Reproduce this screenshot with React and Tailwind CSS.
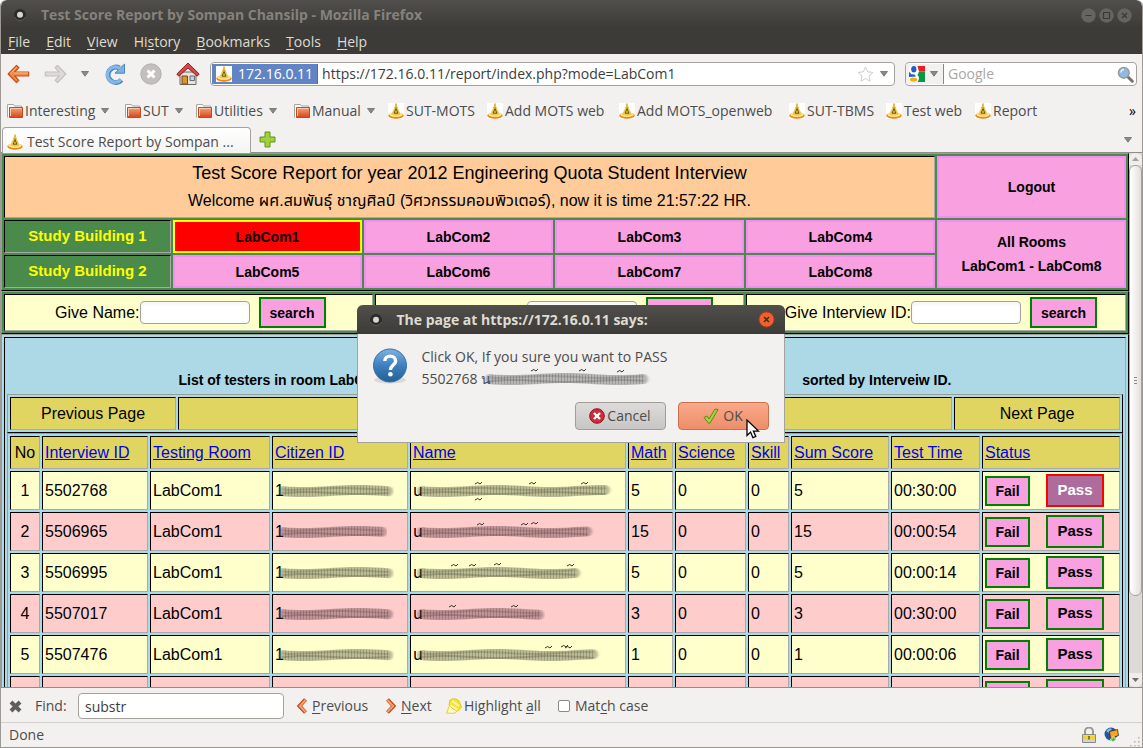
import { useState } from "react"

const BOOKMARKS = [
  { label: "Interesting", folder: true, width: "w-[118px]" },
  { label: "SUT", folder: true, width: "w-[71px]" },
  { label: "Utilities", folder: true, width: "w-[98px]" },
  { label: "Manual", folder: true, width: "w-[94px]" },
  { label: "SUT-MOTS", width: "w-[99px]" },
  { label: "Add MOTS web", width: "w-[132px]" },
  { label: "Add MOTS_openweb", width: "w-[170px]" },
  { label: "SUT-TBMS", width: "w-[97px]" },
  { label: "Test web", width: "w-[89px]" },
  { label: "Report", width: "w-[80px]" },
]

const MENUS = [
  ["", "F", "ile"],
  ["", "E", "dit"],
  ["", "V", "iew"],
  ["Hi", "s", "tory"],
  ["", "B", "ookmarks"],
  ["", "T", "ools"],
  ["", "H", "elp"],
]

const ROWS = [
  { no: 1, id: "5502768", room: "LabCom1", math: 5, science: 0, skill: 0, sum: 5, time: "00:30:00", cid: 118, name: 194, marks: [[58, 3], [58, 19], [112, 3], [164, 3]] },
  { no: 2, id: "5506965", room: "LabCom1", math: 15, science: 0, skill: 0, sum: 15, time: "00:00:54", cid: 114, name: 180, marks: [[60, 3], [104, 3], [114, 2]] },
  { no: 3, id: "5506995", room: "LabCom1", math: 5, science: 0, skill: 0, sum: 5, time: "00:00:14", cid: 118, name: 163, marks: [[34, 3], [52, 3], [77, 2], [150, 3]] },
  { no: 4, id: "5507017", room: "LabCom1", math: 3, science: 0, skill: 0, sum: 3, time: "00:30:00", cid: 118, name: 130, marks: [[32, 3], [94, 3]] },
  { no: 5, id: "5507476", room: "LabCom1", math: 1, science: 0, skill: 0, sum: 1, time: "00:00:06", cid: 118, name: 186, marks: [[128, 3], [144, 2], [148, 3]] },
  { no: "" },
]

const COLUMNS = ["Interview ID", "Testing Room", "Citizen ID", "Name", "Math", "Science", "Skill", "Sum Score", "Test Time", "Status"]

function Caret() {
  return (
    <svg width="8" height="6" viewBox="0 0 8 6" className="shrink-0" aria-hidden="true">
      <path d="M0.500 0.500h7L4 5.200z" fill="#8b8985" stroke="#6f6d69" strokeWidth="0.800" />
    </svg>
  )
}

function SiteIcon() {
  return (
    <svg width="16" height="16" viewBox="0 0 16 16" className="shrink-0 bg-white" aria-hidden="true">
      <ellipse cx="8" cy="12.500" rx="7.800" ry="3.200" fill="#f39a1e" />
      <ellipse cx="8" cy="11.600" rx="6.600" ry="2.200" fill="#fdf0b4" />
      <path d="M7.500 0.500h1L9.500 4.500l3.500 7q-5 2.500-10 0l3.500-7z" fill="#f0ca45" />
      <path d="M8 0.500v3M6.500 4.500h3" stroke="#d9a520" />
      <path d="M8 5.500l-1.800 4.500M8.200 5.500l1.500 4.500M6 10.200h4.200" stroke="#6b5320" fill="none" />
      <path d="M1 13.200q7 3.400 14 0" stroke="#e8801a" fill="none" />
    </svg>
  )
}

function FolderIcon() {
  return (
    <svg width="16" height="16" viewBox="0 0 16 16" className="shrink-0" aria-hidden="true">
      <defs>
        <linearGradient id="folder" x1="0" y1="0" x2="0" y2="1">
          <stop offset="0" stopColor="#f6a27a" />
          <stop offset="1" stopColor="#d6451b" />
        </linearGradient>
      </defs>
      <path d="M0.500 14.500v-13h6l1 1.500h7v3" fill="#fff" stroke="#a8a5a0" />
      <path d="M2.500 14.500v-10h13v10z" fill="url(#folder)" stroke="#c24a1d" />
      <path d="M3.500 13v-7.500h11" fill="none" stroke="#fbc9ae" />
    </svg>
  )
}

function BackArrow({ disabled }) {
  return (
    <svg width="24" height="20" viewBox="0 0 24 20" className={disabled ? "-scale-x-100" : ""} aria-hidden="true">
      <path
        d="M9.500 1.500L1.200 10l8.300 8.500 2.400-2.200-4.200-4.300h14v-4h-14l4.200-4.300z"
        fill={disabled ? "#dddbd8" : "#f18a45"}
        stroke={disabled ? "#c4c1bd" : "#c8501c"}
        strokeLinejoin="round"
        strokeWidth="1.200"
      />
      {!disabled && <path d="M9.500 3.300L3.200 9.500M7 9h14" stroke="#fbc08e" fill="none" />}
    </svg>
  )
}

function ReloadIcon() {
  return (
    <svg width="22" height="22" viewBox="0 0 22 22" aria-hidden="true">
      <path d="M17.500 17A7.700 7.700 0 1 1 15.500 5" fill="none" stroke="#4a86c2" strokeWidth="5" />
      <path d="M11 10.200h9.500v-9l-3.200 2.600z" fill="#7db1e2" stroke="#4a86c2" strokeLinejoin="round" />
      <path d="M17 16.600A7.700 7.700 0 1 1 16 5.600" fill="none" stroke="#86b7e6" strokeWidth="3.200" />
    </svg>
  )
}

function StopIcon() {
  return (
    <svg width="22" height="22" viewBox="0 0 22 22" aria-hidden="true">
      <circle cx="11" cy="11" r="10.200" fill="#c2bfbc" stroke="#b3b0ac" />
      <path d="M7.500 7.500l7 7M14.500 7.500l-7 7" stroke="#fff" strokeWidth="3" />
    </svg>
  )
}

function HomeIcon() {
  return (
    <svg width="24" height="24" viewBox="0 0 24 24" aria-hidden="true">
      <path d="M4 10h16v12.500H4z" fill="#e6e4e0" stroke="#6d6b66" />
      <path d="M6 14h5.500v8H6z" fill="#d9972c" stroke="#7c4d12" />
      <path d="M14 14h4.500v4.500H14z" fill="#bcd3ea" stroke="#6d6b66" />
      <path d="M12 1L0.800 12l2 2.200L12 6l9.200 8.200 2-2.200z" fill="#cf4a4a" stroke="#96201f" strokeLinejoin="round" />
    </svg>
  )
}

function GoogleIcon() {
  return (
    <svg width="16" height="16" viewBox="0 0 16 16" className="shrink-0" aria-hidden="true">
      <path d="M0 0h16v16H0z" fill="#fff" />
      <path d="M8.500 0H16v5.500h-6z" fill="#ee1c25" />
      <path d="M10 5.500h6V16H8.500q3-4 0-7z" fill="#0d9648" />
      <path d="M0 5.500l2.500 2.800H0z" fill="#e2342b" />
      <ellipse cx="4.800" cy="3.200" rx="2.600" ry="3.200" fill="#1d5fc9" />
      <path d="M0 8l5.500.5 1.500 2L0 11z" fill="#1d5fc9" />
      <ellipse cx="4.500" cy="13.600" rx="3.600" ry="2.200" fill="#f3ae14" />
    </svg>
  )
}

function SearchIcon() {
  return (
    <svg width="17" height="17" viewBox="0 0 17 17" className="shrink-0" aria-hidden="true">
      <path d="M10.500 10.500l4.800 4.800" stroke="#76746f" strokeWidth="3" strokeLinecap="round" />
      <circle cx="6.800" cy="6.800" r="5.400" fill="#8fb8e6" stroke="#9a9894" strokeWidth="1.400" />
      <path d="M4 6.500a3 3 0 0 1 3-3" stroke="#e7f1fb" strokeWidth="1.400" fill="none" />
    </svg>
  )
}

function WindowDot() {
  return (
    <svg width="14" height="14" viewBox="0 0 14 14" className="shrink-0" aria-hidden="true">
      <circle cx="7" cy="7" r="6" fill="#2c2b28" />
      <path d="M1.500 9a6 6 0 0 0 11 0" stroke="#5b5a55" fill="none" />
      <circle cx="7" cy="6.800" r="3" fill="#d8d5cf" />
    </svg>
  )
}

function Chevron({ flip }) {
  return (
    <svg width="12" height="16" viewBox="0 0 12 16" className={flip ? "shrink-0 -scale-x-100" : "shrink-0"} aria-hidden="true">
      <path d="M9.500 1.500L3.500 8L9.500 14.500" fill="none" stroke="#c4431c" strokeWidth="4" />
      <path d="M9.500 2L3.800 8L9.500 14" fill="none" stroke="#f4a06b" strokeWidth="2" />
    </svg>
  )
}

// rubbed-out text, so only a grey smear and a few stray marks are left
function Smudge({ width, marks = [], color = "#4c4c38" }) {
  const wave = (y, amp, phase) => {
    let d = `M5 ${y}`
    for (let x = 8; x <= width - 5; x += 6) {
      d += ` L${x} ${(y + Math.sin(x / 17 + phase) * amp).toFixed(1)}`
    }
    return d
  }
  return (
    <svg width={width + 4} height="24" viewBox={`0 0 ${width + 4} 24`} className="-ml-1.5 shrink-0" aria-hidden="true">
      <defs>
        <filter id="rub" x="-5%" y="-80%" width="110%" height="260%">
          <feGaussianBlur stdDeviation="1.500 0.700" />
        </filter>
        <pattern id="grain" width="3" height="24" patternUnits="userSpaceOnUse">
          <path d="M1.500 0v24" stroke="#000" strokeOpacity="0.160" />
        </pattern>
      </defs>
      <g filter="url(#rub)" fill="none" stroke={color} strokeLinecap="round">
        <path d={wave(12, 1, 0)} strokeWidth="10" strokeOpacity="0.380" />
        <path d={wave(10, 1, 1)} strokeWidth="2" strokeOpacity="0.220" />
        <path d={wave(14, 1, 3)} strokeWidth="2" strokeOpacity="0.280" />
      </g>
      <path d={wave(12, 1, 0)} fill="none" strokeWidth="9" stroke="url(#grain)" />
      {marks.map(([x, y]) => (
        <path key={`${x}-${y}`} d={`M${x} ${y + 2}q3 -3 5 0l2 -2`} stroke="#333" fill="none" />
      ))}
    </svg>
  )
}

function LabButton({ children, active, className = "" }) {
  return (
    <button
      className={`border-2 text-sm font-bold text-black ${
        active ? "border-[#ffff00] bg-[#ff0000]" : "border-[#f18ef0] bg-[#f9a1e0]"
      } ${className}`}
    >
      {children}
    </button>
  )
}

function SearchCell({ label, id, labelWidth }) {
  return (
    <form
      onSubmit={(e) => e.preventDefault()}
      className="flex h-[37px] items-center justify-center border border-t-black border-l-black border-r-[#a9a9a9] border-b-[#a9a9a9] bg-[#ffffcc]"
    >
      <label htmlFor={id} className={`${labelWidth} text-right whitespace-nowrap`}>{label}</label>
      <input id={id} className="h-[23px] w-[110px] rounded border border-[#a5a29e] bg-white px-1 shadow-inner" />
      <button className="ml-[9px] h-[31px] w-[67px] border-2 border-[#008000] bg-[#f9a1e0] text-sm font-bold">search</button>
    </form>
  )
}

function TitleBar() {
  return (
    <div className="flex h-7 items-center rounded-t-md bg-gradient-to-b from-[#504f4b] to-[#3c3b37] pt-0.5 pr-2.5 pl-3">
      <WindowDot />
      <h1 className="ml-3.5 flex-1 truncate font-bold text-[#85827c]">
        Test Score Report by Sompan Chansilp - Mozilla Firefox
      </h1>
      <div className="flex gap-[3px]">
        {["M4.500 7.500h6", "M4.500 4.500h6v6h-6z", "M5 5l5 5M10 5l-5 5"].map((d, i) => (
          <button key={d} aria-label={["Minimize", "Maximize", "Close"][i]}>
            <svg width="15" height="15" viewBox="0 0 15 15">
              <circle cx="7.500" cy="7.500" r="7.200" fill="#66645f" />
              <path d={d} stroke="#3a3935" strokeWidth="1.200" fill="none" />
            </svg>
          </button>
        ))}
      </div>
    </div>
  )
}

function Toolbar() {
  return (
    <div className="flex h-10 items-center pr-[5px] pl-1.5">
      <button aria-label="Back" className="w-9"><BackArrow /></button>
      <button aria-label="Forward" className="w-[38px]"><BackArrow disabled /></button>
      <button aria-label="History" className="w-[23px]"><Caret /></button>
      <button aria-label="Reload" className="w-9"><ReloadIcon /></button>
      <button aria-label="Stop" className="w-9"><StopIcon /></button>
      <button aria-label="Home" className="w-[34px]"><HomeIcon /></button>

      <div className="flex h-6 flex-1 items-center rounded border border-[#a5a29e] bg-white pr-1.5 pl-px">
        <div className="flex h-5 items-center gap-1.5 border-r border-[#4d6fa8] bg-[#6185c4] px-1 text-white">
          <SiteIcon />
          <span>172.16.0.11</span>
        </div>
        <input
          aria-label="Address"
          defaultValue="https://172.16.0.11/report/index.php?mode=LabCom1"
          className="min-w-0 flex-1 bg-transparent px-1 text-[#3c3c3c] outline-none"
        />
        <svg width="17" height="16" viewBox="0 0 17 16" className="mr-1.5" aria-hidden="true">
          <path d="M8.500 1l2.200 4.800 5.300.6-3.900 3.600 1 5.200-4.600-2.600-4.600 2.600 1-5.200L1 6.400l5.300-.6z" fill="#fff" stroke="#cfccc8" />
        </svg>
        <Caret />
      </div>

      <div className="ml-2.5 flex h-6 w-[232px] items-center rounded border border-[#a5a29e] bg-white pr-0.5">
        <button aria-label="Search engine" className="flex h-5 w-[38px] items-center gap-[5px] border-r border-[#8b8985] bg-[#f2f1f0] pl-[3px]">
          <GoogleIcon />
          <Caret />
        </button>
        <input aria-label="Search" placeholder="Google" className="min-w-0 flex-1 px-1 outline-none placeholder:text-[#aaa7a3]" />
        <SearchIcon />
      </div>
    </div>
  )
}

function ConfirmDialog({ onClose }) {
  return (
    <div
      role="dialog"
      aria-label="The page at https://172.16.0.11 says:"
      className="absolute top-[305px] left-[calc(50%-215px)] w-[428px] rounded-t-md border border-t-0 border-[#a5a29e] bg-[#f2f1f0]"
    >
      <div className="-mx-px flex h-[29px] items-center rounded-t-md bg-gradient-to-b from-[#504f4b] to-[#3c3b37] pr-2.5 pl-3">
        <WindowDot />
        <h2 className="ml-3.5 flex-1 font-bold text-[#dfdbd2]">The page at https://172.16.0.11 says:</h2>
        <button aria-label="Close" onClick={onClose}>
          <svg width="17" height="17" viewBox="0 0 17 17">
            <circle cx="8.500" cy="8.500" r="7.500" fill="#ee6231" stroke="#b83c12" />
            <path d="M6 6l5 5M11 6l-5 5" stroke="#4a2012" strokeWidth="1.400" />
          </svg>
        </button>
      </div>

      <div className="flex gap-3.5 px-3.5 pt-3">
        <svg width="36" height="38" viewBox="0 0 36 38" className="shrink-0" aria-hidden="true">
          <defs>
            <linearGradient id="ask" x1="0" y1="0" x2="0" y2="1">
              <stop offset="0" stopColor="#7fb2dd" />
              <stop offset="0.500" stopColor="#3d7fbf" />
              <stop offset="1" stopColor="#23618f" />
            </linearGradient>
          </defs>
          <ellipse cx="18" cy="34" rx="16" ry="3.500" fill="#000" opacity="0.100" />
          <circle cx="18" cy="19.500" r="16.500" fill="url(#ask)" stroke="#2f6fae" />
          <path d="M12.800 15c0-6.500 10.800-6.500 10.800 0 0 4-5.200 4.200-5.200 9" fill="none" stroke="#fff" strokeWidth="3.400" />
          <circle cx="18.400" cy="28.300" r="2.300" fill="#fff" />
        </svg>
        <div className="leading-[22px]">
          <p>Click OK, If you sure you want to PASS</p>
          <p className="flex h-[22px] items-center">
            <span>5502768 น</span>
            <Smudge width={168} marks={[[46, 2], [94, 2], [132, 3]]} color="#555" />
          </p>
        </div>
      </div>

      <div className="flex justify-end gap-3 pt-3 pr-[15px] pb-3">
        <button
          onClick={onClose}
          className="flex h-7 w-[91px] items-center justify-center gap-0.5 rounded border border-[#a09d99] bg-gradient-to-b from-[#dedcda] to-[#c8c6c4]"
        >
          <svg width="16" height="16" viewBox="0 0 16 16" aria-hidden="true">
            <circle cx="8" cy="8" r="7.300" fill="#cf2b3a" stroke="#8e1420" />
            <path d="M5 5l6 6M11 5l-6 6" stroke="#fff" strokeWidth="2.400" />
          </svg>
          Cancel
        </button>
        <button
          onClick={onClose}
          className="relative flex h-7 w-[91px] items-center justify-center gap-1 rounded border border-[#c9714f] bg-gradient-to-b from-[#f8a98a] to-[#ee8d69]"
        >
          <svg width="16" height="16" viewBox="0 0 16 16" aria-hidden="true">
            <path d="M1 9.500l3-1.500 2 3L12 1l3 .5L7 15.200H5.500z" fill="#a4d63c" stroke="#5a8a1c" strokeLinejoin="round" />
          </svg>
          OK
          <svg width="14" height="21" viewBox="0 0 14 21" className="absolute top-4 left-[67px]" aria-hidden="true">
            <path d="M1 1v15.500l3.600-3.400 2.300 5.600 2.900-1.200-2.400-5.400H12.500z" fill="#fff" stroke="#000" strokeWidth="1.300" />
          </svg>
        </button>
      </div>
    </div>
  )
}

function App() {
  const [open, setOpen] = useState(true)
  const cell = "border border-t-black border-l-black border-r-[#a9a9a9] border-b-[#a9a9a9]"
  const box = "border border-t-[#9c9c9c] border-l-[#9c9c9c] border-r-black border-b-black"

  return (
    <div className="bg-white font-['Open_Sans','Noto_Sans',sans-serif] text-sm text-[#4c4c4c]">
      <div className="relative flex h-screen flex-col overflow-hidden rounded-t-md border-x border-b border-[#9d9a96] bg-[#f2f1f0]">
        <TitleBar />

        <nav className="flex h-[26px] items-center gap-4 bg-[#3c3b37] pt-0.5 pl-[7px] text-[#dfdbd2]">
          {MENUS.map(([before, key, after]) => (
            <button key={key + after}>
              {before}<u className="underline-offset-2">{key}</u>{after}
            </button>
          ))}
        </nav>

        <Toolbar />

        {/* Bookmarks */}
        <div className="flex h-[33px] items-center pl-1.5">
          {BOOKMARKS.map((b) => (
            <a key={b.label} href="#" className={`flex shrink-0 items-center gap-0.5 whitespace-nowrap ${b.width}`}>
              {b.folder ? <FolderIcon /> : <SiteIcon />}
              {b.label}
              {b.folder && <span className="ml-1"><Caret /></span>}
            </a>
          ))}
          <button aria-label="More bookmarks" className="mr-1.5 ml-auto text-black">»</button>
        </div>

        {/* Tabs */}
        <div className="flex h-[26px] items-center border-b border-[#8f8d89] pr-2.5">
          <div className="mt-px ml-px flex h-[26px] w-[249px] items-center gap-1 rounded-t border border-b-0 border-[#a5a29e] bg-gradient-to-b from-white to-[#f4f3f2] px-1 pt-0.5">
            <SiteIcon />
            <span className="truncate">Test Score Report by Sompan ...</span>
          </div>
          <button aria-label="New tab" className="ml-2">
            <svg width="17" height="17" viewBox="0 0 17 17">
              <path d="M6 1h5v5h5v5h-5v5H6v-5H1V6h5z" fill="#a3cf3c" stroke="#5f9420" strokeLinejoin="round" />
            </svg>
          </button>
          <button aria-label="All tabs" className="ml-auto"><Caret /></button>
        </div>

        <div className="flex min-h-0 flex-1">
          {/* Page */}
          <main className="min-w-0 flex-1 overflow-hidden font-['Liberation_Sans','Noto_Sans_Thai',sans-serif] text-base text-black">
            <div className={`grid grid-cols-[167fr_repeat(5,189fr)] grid-rows-[62px_33px_33px] gap-0.5 bg-[#4a8a4a] p-0.5 ${box}`}>
              <div className={`col-span-5 flex flex-col items-center justify-center bg-[#ffcc99] leading-7 ${cell}`}>
                <p className="text-lg leading-7">Test Score Report for year 2012 Engineering Quota Student Interview</p>
                <p>Welcome ผศ.สมพันธุ์ ชาญศิลป์ (วิศวกรรมคอมพิวเตอร์), now it is time 21:57:22 HR.</p>
              </div>
              <LabButton>Logout</LabButton>
              <div className={`flex items-center justify-center text-[15px] font-bold text-[#ffff00] ${cell}`}>Study Building 1</div>
              <LabButton active>LabCom1</LabButton>
              <LabButton>LabCom2</LabButton>
              <LabButton>LabCom3</LabButton>
              <LabButton>LabCom4</LabButton>
              <LabButton className="row-span-2 leading-6">All Rooms<br />LabCom1 - LabCom8</LabButton>
              <div className={`flex items-center justify-center text-[15px] font-bold text-[#ffff00] ${cell}`}>Study Building 2</div>
              <LabButton>LabCom5</LabButton>
              <LabButton>LabCom6</LabButton>
              <LabButton>LabCom7</LabButton>
              <LabButton>LabCom8</LabButton>
            </div>

            <div className={`grid grid-cols-[369fr_369fr_380fr] gap-0.5 bg-[#4a8a4a] p-0.5 ${box}`}>
              <SearchCell label="Give Name:" id="find-name" labelWidth="w-[88px]" />
              <SearchCell label="Give Citizen ID:" id="find-citizen" labelWidth="w-[121px]" />
              <SearchCell label="Give Interview ID:" id="find-interview" labelWidth="w-[136px]" />
            </div>

            <div className={`bg-[#add8e6] p-0.5 ${box}`}>
              <div className={`px-0.5 ${cell}`}>
                <h2 className="mx-auto flex h-14 w-[773px] items-end justify-between pb-1 text-sm font-bold">
                  <span>List of testers in room LabCom1,</span>
                  <span>sorted by Interveiw ID.</span>
                </h2>

                <div className={`grid grid-cols-[166px_1fr_166px] grid-rows-[33px] gap-0.5 p-0.5 ${box}`}>
                  <button className={`bg-[#e0d561] ${cell}`}>Previous Page</button>
                  <div className={`bg-[#e0d561] ${cell}`} />
                  <button className={`bg-[#e0d561] ${cell}`}>Next Page</button>
                </div>

                <table className={`w-full table-fixed border-separate border-spacing-0.5 ${box}`}>
                  <colgroup>
                    <col className="w-[30px]" />
                    <col className="w-[106px]" />
                    <col className="w-[120px]" />
                    <col className="w-[136px]" />
                    <col />
                    <col className="w-[45px]" />
                    <col className="w-[71px]" />
                    <col className="w-[41px]" />
                    <col className="w-[98px]" />
                    <col className="w-[89px]" />
                    <col className="w-[138px]" />
                  </colgroup>
                  <thead>
                    <tr className="bg-[#e0d561] text-left">
                      <th className={`h-[33px] text-center font-normal ${cell}`}>No</th>
                      {COLUMNS.map((c) => (
                        <th key={c} className={`h-[33px] px-0.5 font-normal whitespace-nowrap ${cell}`}>
                          <a href="#" className="text-[#0000ee] underline">{c}</a>
                        </th>
                      ))}
                    </tr>
                  </thead>
                  <tbody>
                    {ROWS.map((r) => (
                      <tr key={r.no} className={r.no % 2 ? "bg-[#ffffcc]" : "bg-[#ffcccc]"}>
                        <td className={`h-[39px] text-center ${cell}`}>{r.no}</td>
                        <td className={`px-0.5 ${cell}`}>{r.id}</td>
                        <td className={`px-0.5 ${cell}`}>{r.room}</td>
                        <td className={`px-0.5 ${cell}`}>
                          {r.id && <div className="flex items-center">1<Smudge width={r.cid} color={r.no % 2 ? "#4c4c38" : "#5a3c40"} /></div>}
                        </td>
                        <td className={`px-0.5 ${cell}`}>
                          {r.id && <div className="flex items-center">น<Smudge width={r.name} marks={r.marks} color={r.no % 2 ? "#4c4c38" : "#5a3c40"} /></div>}
                        </td>
                        <td className={`px-0.5 ${cell}`}>{r.math}</td>
                        <td className={`px-0.5 ${cell}`}>{r.science}</td>
                        <td className={`px-0.5 ${cell}`}>{r.skill}</td>
                        <td className={`px-0.5 ${cell}`}>{r.sum}</td>
                        <td className={`px-0.5 ${cell}`}>{r.time}</td>
                        <td className={`px-0.5 ${cell}`}>
                          <div className="flex items-center gap-4">
                            <button className="h-[30px] w-[45px] border-2 border-[#008000] bg-[#f9a1e0] text-sm font-bold">
                              {r.id && "Fail"}
                            </button>
                            <button
                              onClick={() => setOpen(true)}
                              className={`h-[33px] w-[58px] border-2 text-[15px] font-bold ${
                                r.no === 1
                                  ? "border-[#ff0000] bg-[#ad6c9b] text-white"
                                  : "border-[#008000] bg-[#f9a1e0]"
                              }`}
                            >
                              {r.id && "Pass"}
                            </button>
                          </div>
                        </td>
                      </tr>
                    ))}
                  </tbody>
                </table>
              </div>
            </div>
          </main>

          {/* Scrollbar */}
          <div className="flex w-[13px] flex-col bg-[#dcdad7]">
            <div className="flex h-3 items-center justify-center rounded-t-md bg-[#efeeec]">
              <svg width="7" height="4" viewBox="0 0 7 4"><path d="M0 4h7L3.500 0z" fill="#a5a29e" /></svg>
            </div>
            <div className="flex flex-[432] flex-col items-center justify-center gap-0.5 rounded-md border border-[#a5a29e] bg-gradient-to-r from-white to-[#e2e0de]">
              <div className="h-px w-[3px] bg-[#8b8985]" />
              <div className="h-px w-[3px] bg-[#8b8985]" />
              <div className="h-px w-[3px] bg-[#8b8985]" />
            </div>
            <div className="flex-[77]" />
            <div className="flex h-3.5 items-center justify-center rounded-b-md bg-[#efeeec]">
              <svg width="7" height="4" viewBox="0 0 7 4"><path d="M0 0h7L3.500 4z" fill="#6f6d69" /></svg>
            </div>
          </div>
        </div>

        {/* Find bar */}
        <div className="flex h-9 items-center border-t border-b border-t-[#8f8d89] border-b-[#d3d1ce] pt-0.5 pl-2">
          <button aria-label="Close find bar" className="w-[26px]">
            <svg width="13" height="13" viewBox="0 0 13 13"><path d="M2 2l9 9M11 2l-9 9" stroke="#605e5a" strokeWidth="4" /></svg>
          </button>
          <label htmlFor="find" className="w-[43px]">Find:</label>
          <input id="find" defaultValue="substr" className="h-[26px] w-[206px] rounded border border-[#a5a29e] bg-white px-1.5 text-[#3c3c3c]" />
          <button className="ml-3 flex w-[89px] items-center gap-1"><Chevron /><span><u className="underline-offset-2">P</u>revious</span></button>
          <button className="flex w-[61px] items-center gap-1"><Chevron flip /><span><u className="underline-offset-2">N</u>ext</span></button>
          <button className="flex w-[112px] items-center gap-0.5">
            <svg width="16" height="16" viewBox="0 0 16 16" className="shrink-0" aria-hidden="true">
              <path d="M3.500 7.500L0.500 15.200H9L11.500 12z" fill="#fffbd0" stroke="#e6cf2a" />
              <path d="M4 2q5-3 9 1l2.500 6-3.500 4-5-2L3 7z" fill="#f7e33a" stroke="#e0c81a" />
              <path d="M4.500 7.500l7 4.500M6 3l7 5" stroke="#fff8b0" strokeWidth="1.600" />
            </svg>
            <span className="whitespace-nowrap">Highlight <u className="underline-offset-2">a</u>ll</span>
          </button>
          <label className="flex items-center gap-[5px]">
            <input type="checkbox" className="size-3 appearance-none rounded-xs border border-[#8b8985] bg-white" />
            <span>Mat<u className="underline-offset-2">c</u>h case</span>
          </label>
        </div>

        {/* Status bar */}
        <div className="flex h-6 items-center pr-0.5 pl-2">
          <span className="flex-1">Done</span>
          <svg width="14" height="16" viewBox="0 0 14 16" className="mr-2" aria-hidden="true">
            <path d="M3 8V4.500a4 4 0 0 1 8 0V8" fill="none" stroke="#9a9894" strokeWidth="2" />
            <path d="M0.500 7.500h13v8h-13z" fill="#d5d3cf" stroke="#8b8985" />
            <path d="M1 9h12v3.500H1z" fill="#f0d23c" />
            <path d="M7 9v3.500" stroke="#6d5a10" strokeWidth="1.500" />
          </svg>
          <svg width="16" height="16" viewBox="0 0 16 16" aria-hidden="true">
            <circle cx="7" cy="7" r="6.500" fill="#2456a0" />
            <path d="M2 4q3-4 6-2l-3 4z" fill="#7fb2e8" />
            <path d="M5.500 4.500l8-2 1 6-8 3z" fill="#fba51e" stroke="#3a2a10" strokeWidth="0.800" />
            <path d="M9 15l-3-3h2v-2h3v2h2z" fill="#5cb82c" stroke="#fff" strokeWidth="0.600" />
          </svg>
          <svg width="12" height="12" viewBox="0 0 12 12" className="ml-2 self-end" aria-hidden="true">
            {["10 2", "6 6", "10 6", "2 10", "6 10", "10 10"].map((p) => (
              <path key={p} d={`M${p}h1.500v1.500h-1.500z`} fill="#b5b2ae" />
            ))}
          </svg>
        </div>

        {open && <ConfirmDialog onClose={() => setOpen(false)} />}
      </div>
    </div>
  )
}

export default App
